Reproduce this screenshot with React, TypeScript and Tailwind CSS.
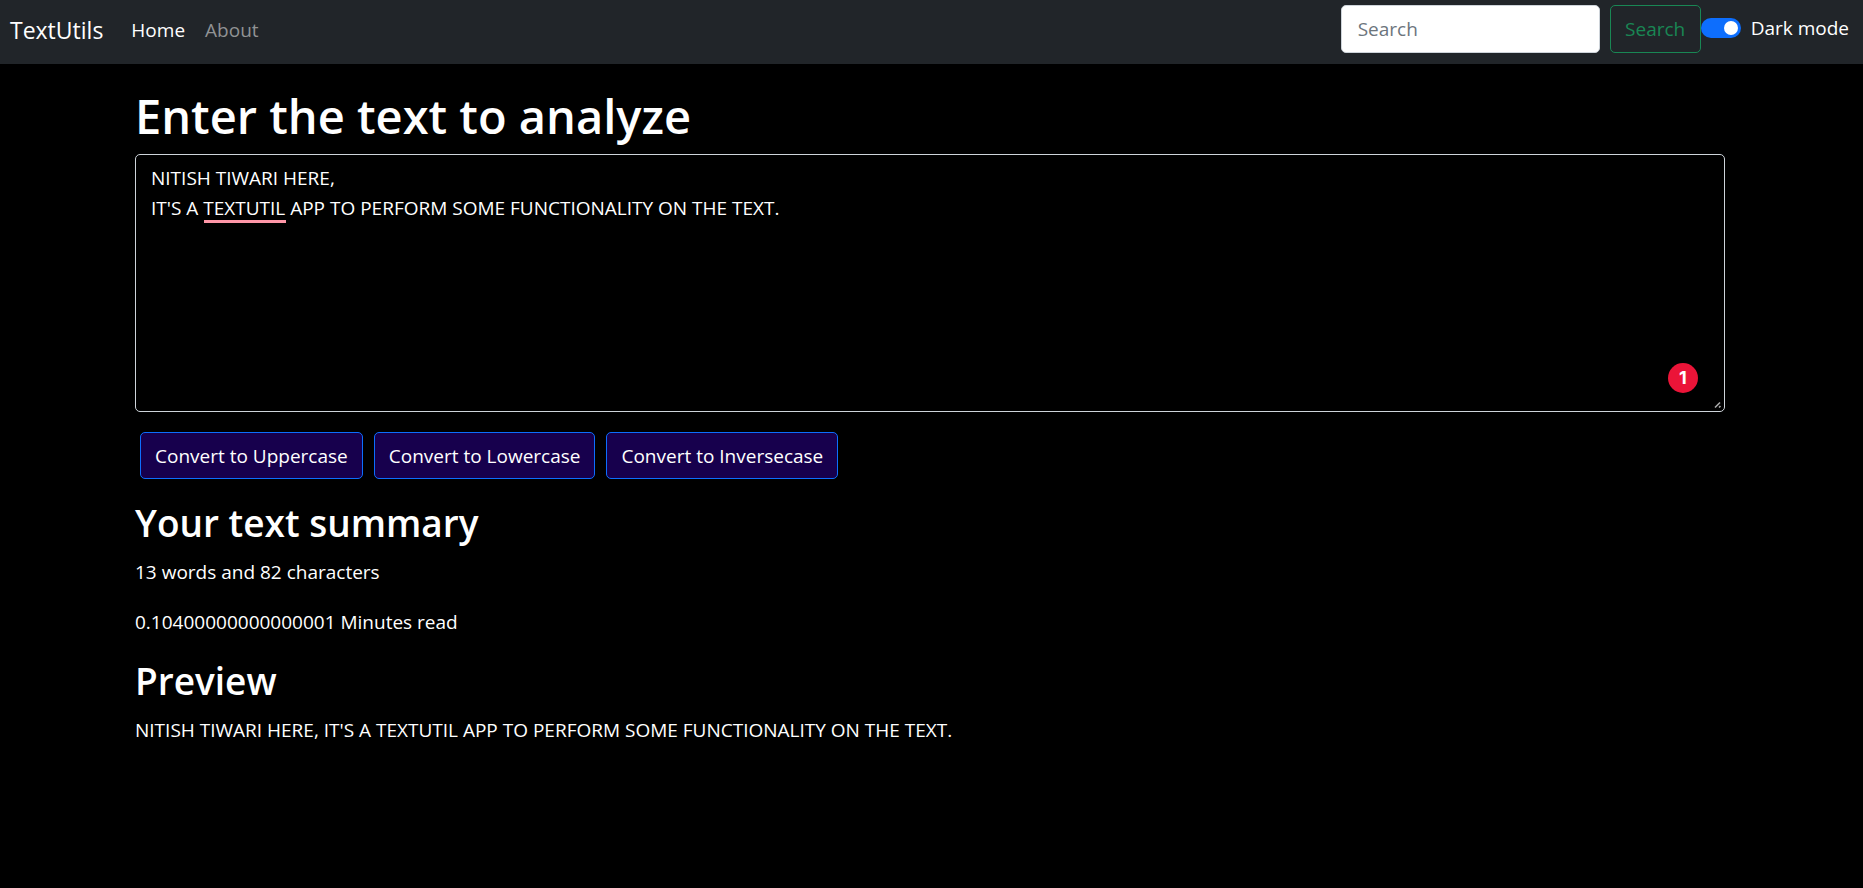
import { useState } from "react";

const INITIAL_TEXT =
  "NITISH TIWARI HERE,\nIT'S A TEXTUTIL APP TO PERFORM SOME FUNCTIONALITY ON THE TEXT.";

const swapCase = (value: string) =>
  value
    .split("")
    .map((c) => (c === c.toUpperCase() ? c.toLowerCase() : c.toUpperCase()))
    .join("");

function Navbar() {
  return (
    <nav className="flex h-16 items-start bg-[#212529] pl-[10px] pr-[14px]">
      <a href="#" className="mt-[11px] text-[23px] leading-[38px] text-white">
        TextUtils
      </a>
      <ul className="ml-7 mt-[15px] flex gap-5">
        <li>
          <a href="#home" className="text-white">
            Home
          </a>
        </li>
        <li>
          <a href="#about" className="text-[#909294]">
            About
          </a>
        </li>
      </ul>
      <form className="ml-auto mt-[5px] flex gap-[10px]" onSubmit={(e) => e.preventDefault()}>
        <input
          type="search"
          aria-label="Search"
          placeholder="Search"
          className="h-12 w-[259px] rounded-[5px] border border-[#ced4da] bg-white px-4 text-[#212529] outline-none placeholder:text-[#6c757d]"
        />
        <button
          type="submit"
          className="h-12 w-[91px] rounded-[5px] border border-[#198754] text-[#198754]"
        >
          Search
        </button>
      </form>
      <div className="mt-[13px] flex items-center gap-[10px]">
        <input
          id="dark-mode"
          type="checkbox"
          role="switch"
          defaultChecked
          className="flex h-5 w-10 appearance-none items-center justify-start rounded-full bg-[#6c757d] px-[3px] before:size-[14px] before:rounded-full before:bg-white checked:justify-end checked:bg-[#0d6efd]"
        />
        <label htmlFor="dark-mode" className="text-white">
          Dark mode
        </label>
      </div>
    </nav>
  );
}

export default function App() {
  const [text, setText] = useState(INITIAL_TEXT);
  const words = text.split(" ").length;
  const actions = [
    { label: "Convert to Uppercase", run: () => setText(text.toUpperCase()) },
    { label: "Convert to Lowercase", run: () => setText(text.toLowerCase()) },
    { label: "Convert to Inversecase", run: () => setText(swapCase(text)) },
  ];

  return (
    <div className="min-h-screen bg-black font-['Segoe_UI','Open_Sans',sans-serif] text-[19px] leading-[30px] text-white">
      <Navbar />
      <main className="ml-[135px] mr-[138px] pt-[22px]">
        <h1 className="text-[47px] font-semibold leading-[60px]">
          <label htmlFor="source-text">Enter the text to analyze</label>
        </h1>
        <div className="relative mt-2">
          <textarea
            id="source-text"
            rows={8}
            spellCheck={false}
            value={text}
            onChange={(e) => setText(e.target.value)}
            className="block w-full resize-none rounded-[5px] border border-[#ced4da] bg-black px-[15px] py-2 outline-none"
          />
          {text === INITIAL_TEXT && (
            <span
              aria-hidden="true"
              className="absolute left-[69px] top-[66px] h-[3px] w-[82px] bg-[#ff97a8]"
            />
          )}
          <svg
            aria-hidden="true"
            viewBox="0 0 8 8"
            className="pointer-events-none absolute bottom-[3px] right-[3px] size-2"
            stroke="#a8a8a8"
            strokeWidth="1.6"
          >
            <path d="M1 6.5L6 1.5M5 6.5L6.5 5" />
          </svg>
          <span className="absolute bottom-[19px] right-[27px] flex size-[30px] items-center justify-center rounded-full bg-[#eb1438] font-['Inter',sans-serif] text-lg font-bold">
            1
          </span>
        </div>
        <div className="ml-[5px] mt-5 flex flex-wrap gap-[11px]">
          {actions.map((action) => (
            <button
              key={action.label}
              type="button"
              onClick={action.run}
              className="h-[47px] rounded-[5px] border border-[#0d6efd] bg-[#17004d] px-[14px]"
            >
              {action.label}
            </button>
          ))}
        </div>
        <section className="mt-5">
          <h2 className="text-[37px] font-semibold leading-[48px]">Your text summary</h2>
          <p className="mt-[10px]">
            {words} words and {text.length} characters
          </p>
          <p className="mt-5">{0.008 * words} Minutes read</p>
        </section>
        <section className="mt-5">
          <h2 className="text-[37px] font-semibold leading-[48px]">Preview</h2>
          <p className="mt-[10px]">{text}</p>
        </section>
      </main>
    </div>
  );
}
